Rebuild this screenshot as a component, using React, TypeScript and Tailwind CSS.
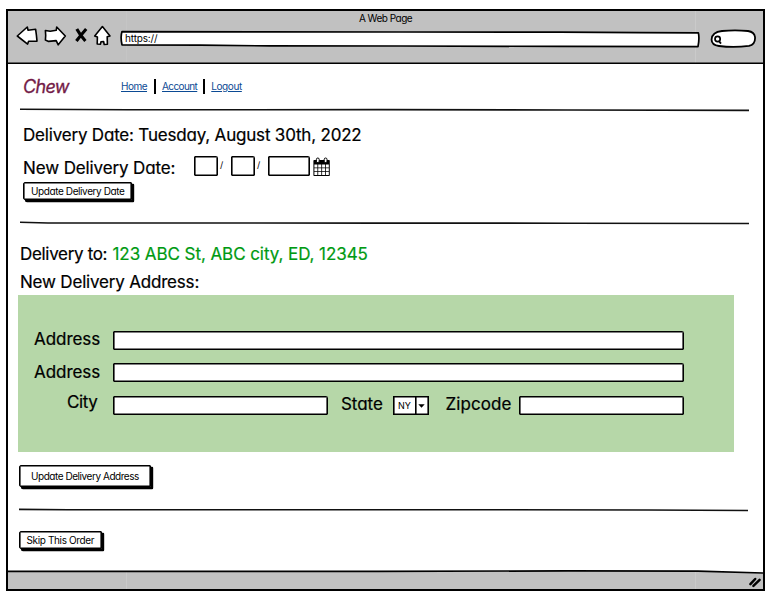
import type { ReactNode } from "react";

function Rule({ d }: { d: string }) {
  return (
    <svg className="block h-1 w-[750px] shrink-0" viewBox="0 0 750 4" fill="none" stroke="#111" strokeWidth="1.6">
      <path d={d} />
    </svg>
  );
}

function NavLink({ children, className }: { children: ReactNode; className: string }) {
  return (
    <a href="#" className={`text-[10px] leading-4 text-[#0b4a94] underline underline-offset-1 ${className}`}>
      {children}
    </a>
  );
}

function SketchButton({ children, className }: { children: ReactNode; className: string }) {
  return (
    <button
      className={`block shrink-0 whitespace-nowrap rounded-[2px_1px_1px_2px] border border-black bg-white text-left text-[10px] shadow-[inset_0_0_0_0.6px_#000,2px_2px_0_0.2px_#000] ${className}`}
    >
      {children}
    </button>
  );
}

function Field({ className }: { className: string }) {
  return (
    <div
      className={`shrink-0 rounded-[1px_1.5px_1px_1px] border border-black bg-white shadow-[inset_0_0_0_0.6px_#000] ${className}`}
    />
  );
}

function ToolbarIcons() {
  return (
    <svg
      className="block h-[24px] w-[98px] shrink-0"
      viewBox="14 24 98 24"
      fill="#fff"
      stroke="#000"
      strokeWidth="1.6"
      strokeLinejoin="round"
      strokeLinecap="round"
    >
      <path d="M17.3 36 27.3 27l.7 3.2 7.6-1 .8 6 .6 6-8.4.1-1 2.8Z" />
      <path d="M65.3 36 56.7 27l-.5 3.3-6 1-4.8-.8.3 5-.3 4.6 3.2 1.3 7.6-.8 2 4.2Z" />
      <path d="M76.8 29Q80 35 85.4 41M86.2 29Q81 35 76.4 41" strokeWidth="3.1" strokeLinecap="butt" fill="none" />
      <path d="M102.4 26.6 110 36l-2.8.8.2 7.5-3.2.2-.6-3-2.6.2-.5 2.5-3.3-.2.2-7-2.7-1Z" />
    </svg>
  );
}

function CalendarIcon() {
  return (
    <svg className="block h-[19px] w-[18px] shrink-0" viewBox="0 0 18 19">
      <rect x="0.4" y="3" width="16.4" height="16" rx="0.8" fill="#000" />
      <g fill="#fff">
        <path d="M1.4 7.4h3v3h-3zM5.2 7.4h3.1v3H5.2zM9.1 7.4h3.1v3H9.1zM13 7.4h2.8v3H13z" />
        <path d="M1.4 11.2h3v3h-3zM5.2 11.2h3.1v3H5.2zM9.1 11.2h3.1v3H9.1zM13 11.2h2.8v3H13z" />
        <path d="M1.4 15h3v3h-3zM5.2 15h3.1v3H5.2zM9.1 15h3.1v3H9.1zM13 15h2.8v3H13z" />
      </g>
      <g fill="#fff" stroke="#000" strokeWidth="1">
        <rect x="3.4" y="1" width="2.8" height="4.6" rx="1.4" />
        <rect x="11.2" y="1" width="2.8" height="4.6" rx="1.4" />
      </g>
    </svg>
  );
}

function BrowserHeader() {
  return (
    <header className="h-[53px] shrink-0 border-b border-black bg-[#c1c1c1] bg-[linear-gradient(90deg,transparent_118px,#c5c5c5_118px,#c5c5c5_119px,transparent_119px,transparent_687px,#cacaca_687px,#cacaca_688px,transparent_688px)] shadow-[inset_0_-0.6px_0_#000]">
      <div className="h-[13px] text-center text-[10px] leading-[15px] tracking-[-0.5px]">A Web Page</div>
      <div className="flex h-6 pl-1.5">
        <ToolbarIcons />
        <div className="relative ml-2 h-6 w-[582px] shrink-0">
          <svg
            className="absolute inset-0 h-6 w-[582px]"
            viewBox="120 24 582 24"
            fill="#fff"
            stroke="#000"
            strokeWidth="1.7"
            strokeLinejoin="round"
          >
            <path d="M122 31.6 260 31.8 400 32 560 32.1 640 32.7 698.4 32.9Q699.6 38 698 46.6L560 46.4 400 46 270 45.9 200 45.2 122 44.8Q120.2 37 122 31.6Z" />
          </svg>
          <span className="relative block pl-[5px] pt-[7px] text-[10px] leading-[14px] tracking-[-0.15px]">
            https://
          </span>
        </div>
        <svg className="ml-2 block h-6 w-12 shrink-0" viewBox="710 26 48 24" fill="#fff" stroke="#000" strokeWidth="1.8">
          <path d="M711.6 41.5Q712 34 722 33Q735 31.6 748 33Q754.4 34 755 39Q755.6 46.5 749 47.8Q734 50 719 48Q711.4 47 711.6 41.5Z" />
          <circle cx="717.6" cy="41" r="2.6" strokeWidth="1.7" />
          <path d="M719 43.2 721 45.6" />
        </svg>
      </div>
    </header>
  );
}

function DeliveryDate() {
  return (
    <section className="h-[109px] shrink-0 pl-[15px]">
      <div className="h-[34px] pt-3 text-[17px] leading-[22px] tracking-[-0.19px] [-webkit-text-stroke:0.2px]">
        Delivery Date: Tuesday, August 30th, 2022
      </div>
      <div className="flex h-9 pt-2.5">
        <div className="w-[171px] shrink-0 text-[17px] leading-[25px] tracking-[-0.12px] [-webkit-text-stroke:0.2px]">
          New Delivery Date:
        </div>
        <Field className="h-5 w-6" />
        <span className="w-[13px] pl-[2px] text-[9px] leading-[18px]">/</span>
        <Field className="h-5 w-6" />
        <span className="w-[13px] pl-[2px] text-[9px] leading-[18px]">/</span>
        <Field className="h-5 w-[42px]" />
        <div className="ml-[3px] pt-px">
          <CalendarIcon />
        </div>
      </div>
      <SketchButton className="h-[18px] w-[109px] pl-[7px] leading-[15px] tracking-[-0.4px]">
        Update Delivery Date
      </SketchButton>
    </section>
  );
}

function AddressForm() {
  return (
    <div className="h-[157px] w-[715.5px] shrink-0 bg-[#b6d7a8] pt-9 text-[17px] leading-[19px] tracking-[-0.05px] [-webkit-text-stroke:0.2px]">
      <div className="flex h-8">
        <span className="-mt-px w-[95px] pl-4">Address</span>
        <Field className="h-[19px] w-[571px]" />
      </div>
      <div className="flex h-8">
        <span className="w-[95px] pl-4">Address</span>
        <Field className="h-[19px] w-[571px]" />
      </div>
      <div className="flex h-8 pt-px">
        <span className="-mt-[3px] w-[95px] pl-[49px] tracking-[-0.4px]">City</span>
        <Field className="h-[19px] w-[215px]" />
        <span className="-mt-px w-[65px] pl-[13px]">State</span>
        <div className="flex h-[19px] w-[35.5px] border border-black bg-white shadow-[inset_0_0_0_0.6px_#000]">
          <span className="w-[21px] pl-1 text-[9px] leading-[17px] [-webkit-text-stroke:0]">NY</span>
          <div className="flex flex-1 items-center justify-center border-l border-black shadow-[inset_0.6px_0_0_#000]">
            <svg className="block h-1 w-[7px]" viewBox="0 0 7 4">
              <path d="M0.3 0.2h6.4L3.5 3.8Z" />
            </svg>
          </div>
        </div>
        <span className="-mt-px w-[90px] pl-[17px] tracking-[0.08px]">Zipcode</span>
        <Field className="h-[19px] w-[165px]" />
      </div>
    </div>
  );
}

function DeliveryAddress() {
  return (
    <section className="flex h-[283px] shrink-0 flex-col pl-[10px]">
      <div className="flex h-11 pl-[2px] pt-[18px] text-[17px] leading-[22px] [-webkit-text-stroke:0.2px]">
        <span className="w-[92.5px] tracking-[-0.32px]">Delivery to:</span>
        <span className="tracking-[-0.07px] text-[#009a12]">123 ABC St, ABC city, ED, 12345</span>
      </div>
      <div className="h-[26px] pl-[2px] pt-[2px] text-[17px] leading-[22px] tracking-[-0.19px] [-webkit-text-stroke:0.2px]">
        New Delivery Address:
      </div>
      <AddressForm />
      <SketchButton className="ml-px mt-[13px] h-[22px] w-[132px] pl-[11px] leading-5 tracking-[-0.45px]">
        Update Delivery Address
      </SketchButton>
    </section>
  );
}

export default function App() {
  return (
    <div className="h-[597px] w-[766px] overflow-hidden bg-white pl-1.5 pt-[9px] font-['Inter','Open_Sans',sans-serif] text-black [font-feature-settings:'cv11']">
      <div className="flex h-[582px] w-[759px] flex-col border-2 border-black bg-white">
        <BrowserHeader />
        <nav className="flex h-11 shrink-0 pl-[15px] pt-3">
          <span className="w-[98px] text-[18px] italic leading-[21px] tracking-[-0.65px] text-[#741b47] [-webkit-text-stroke:0.3px]">
            Chew
          </span>
          <NavLink className="mt-0.5 tracking-[-0.5px]">Home</NavLink>
          <i className="ml-[7px] mt-[3px] block h-[15px] w-[2px] bg-black" />
          <NavLink className="ml-[6px] mt-0.5 tracking-[-0.6px]">Account</NavLink>
          <i className="ml-[6px] mt-[3px] block h-[15px] w-[2px] bg-black" />
          <NavLink className="ml-[6px] mt-0.5 tracking-[-0.4px]">Logout</NavLink>
        </nav>
        <Rule d="M12 1.3 120 1.8 370 1.6 560 2 741 2.4" />
        <DeliveryDate />
        <Rule d="M12 1.3 40 2 370 2.1 560 2.2 741 2.5" />
        <DeliveryAddress />
        <Rule d="M11 1.4 60 1.8 500 1.7 640 2 740 2.5" />
        <section className="h-[58px] shrink-0 pl-[11px] pt-[19px]">
          <SketchButton className="h-[18px] w-[83px] pl-[6.5px] leading-[15px] tracking-[-0.36px]">
            Skip This Order
          </SketchButton>
        </section>
        <footer className="flex-1">
          <svg className="block h-[19px] w-[755px]" viewBox="0 0 755 19">
            <path d="M0 1.3 370 1.3 560 .9 690 1.2 755 3V19H0Z" fill="#c1c1c1" />
            <path d="M118.5 2V19M687.5 2V19" stroke="#cacaca" />
            <path d="M0 1.3 370 1.3 560 .9 690 1.2 755 3" fill="none" stroke="#000" strokeWidth="1.7" />
            <path
              d="M742.4 14.2 747.2 9M745.4 15.8 751.6 9.8"
              fill="none"
              stroke="#000"
              strokeWidth="2.5"
              strokeLinecap="round"
            />
          </svg>
        </footer>
      </div>
    </div>
  );
}
